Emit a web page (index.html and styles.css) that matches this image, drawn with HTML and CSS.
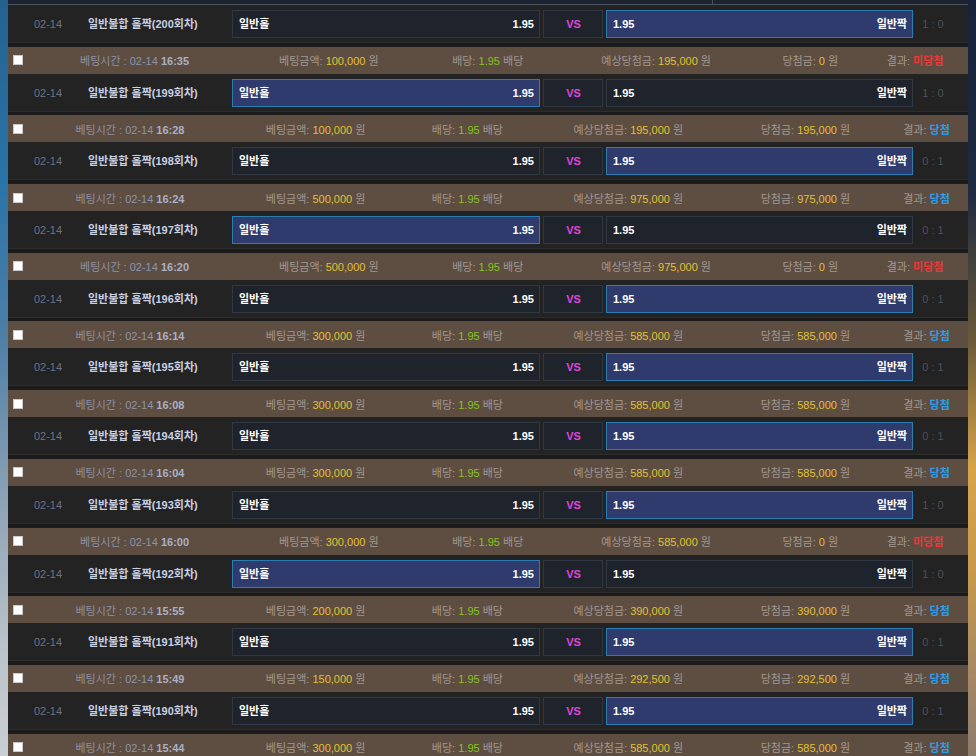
FILE: index.html
```html
<!DOCTYPE html>
<html lang="ko">
<head>
    <meta charset="UTF-8">
    <title>베팅내역</title>
    <link rel="stylesheet" href="styles.css">
</head>
<body>

    <div class="board" id="board">
        <!-- top edge of the header above -->
        <div class="board-head"><span class="head-left"></span><span class="head-right"></span></div>
    </div>

    <script>
        // round, pick (home/away), score, bet time, amount, expected, won, result
        const bets = [
            [200, 'away', '1 : 0', '16:35', '100,000', '195,000', '0', false],
            [199, 'home', '1 : 0', '16:28', '100,000', '195,000', '195,000', true],
            [198, 'away', '0 : 1', '16:24', '500,000', '975,000', '975,000', true],
            [197, 'home', '0 : 1', '16:20', '500,000', '975,000', '0', false],
            [196, 'away', '0 : 1', '16:14', '300,000', '585,000', '585,000', true],
            [195, 'away', '0 : 1', '16:08', '300,000', '585,000', '585,000', true],
            [194, 'away', '0 : 1', '16:04', '300,000', '585,000', '585,000', true],
            [193, 'away', '1 : 0', '16:00', '300,000', '585,000', '0', false],
            [192, 'home', '1 : 0', '15:55', '200,000', '390,000', '390,000', true],
            [191, 'away', '0 : 1', '15:49', '150,000', '292,500', '292,500', true],
            [190, 'away', '0 : 1', '15:44', '300,000', '585,000', '585,000', true]
        ];

        const board = document.getElementById('board');
        let html = '';

        bets.forEach(function (b) {
            const homeOn = b[1] === 'home' ? ' pick-on' : '';
            const awayOn = b[1] === 'away' ? ' pick-on' : '';
            const result = b[7]
                ? '<b class="win">당첨</b>'
                : '<b class="lose">미당첨</b>';

            // game row
            html += '<div class="game">' +
                '<div class="g-date">02-14</div>' +
                '<div class="g-title">일반불합 홀짝(' + b[0] + '회차)</div>' +
                '<div class="pick' + homeOn + '"><span>일반홀</span><span>1.95</span></div>' +
                '<div class="vs-cell"><div class="pick vs">VS</div></div>' +
                '<div class="pick' + awayOn + '"><span>1.95</span><span>일반짝</span></div>' +
                '<div class="g-score">' + b[2] + '</div>' +
            '</div>';

            // bet info row
            html += '<table class="bet"><tr>' +
                '<td class="b-check"><input type="checkbox"></td>' +
                '<td><span class="t-label">베팅시간 :</span> <span class="t-date">02-14</span> <b class="t-time">' + b[3] + '</b></td>' +
                '<td>베팅금액: <span class="money">' + b[4] + '</span> 원</td>' +
                '<td>배당: <span class="odds">1.95</span> 배당</td>' +
                '<td>예상당첨금: <span class="money">' + b[5] + '</span> 원</td>' +
                '<td>당첨금: <span class="money">' + b[6] + '</span> 원</td>' +
                '<td>결과: ' + result + '</td>' +
            '</tr></table>';
        });

        board.insertAdjacentHTML('beforeend', html);
    </script>

</body>
</html>
```

FILE: styles.css
```css
/* Page and blurred backdrop on both sides */
body {
    margin: 0;
    height: 756px;
    overflow: hidden;
    font-family: "Liberation Sans", "Noto Sans CJK KR", sans-serif;
    font-size: 11px;
    background-color: #1c1c1c;
    background-image:
        linear-gradient(to bottom, #23628f 0%, #2b74a8 25%, #4f7fa6 45%, #8aa0b4 65%, #b9c2c9 85%, #c9cfd4 100%),
        linear-gradient(to bottom, #18233a 0%, #1d2a40 25%, #6a5a3a 45%, #d6a44a 62%, #c99a4c 75%, #a48866 90%, #8c7c6c 100%);
    background-size: 8px 100%, 8px 100%;
    background-position: left top, right top;
    background-repeat: no-repeat;
}

.board {
    margin-left: 8px;
    width: 960px;
    background: #1b1b1b;
}

/* Bottom edge of the header that sits above the list */
.board-head {
    display: flex;
    height: 4px;
    background: #1d2430;
    border-bottom: 1px solid #48535f;
}

.head-left {
    width: 704px;
    border-right: 1px solid #48535f;
}

/* Game row */
.game {
    display: grid;
    grid-template-columns: 80px 144px 308px 66px 307px 1fr;
    align-items: center;
    padding: 5px 0 4px;
    background: #232323;
    border-bottom: 1px solid #2d2d2d;
    margin-bottom: 3.7px;
    line-height: 28px;
}

.g-date {
    text-align: center;
    color: #6b7386;
}

.g-title {
    color: #c9d0e3;
    font-weight: bold;
    white-space: nowrap;
}

.g-score {
    text-align: center;
    padding-right: 15px;
    color: #4e5157;
}

.pick {
    display: flex;
    justify-content: space-between;
    height: 26px;
    line-height: 26px;
    padding: 0 5px 0 6px;
    background: #1f242c;
    border: 1px solid #303844;
    color: #ffffff;
    font-weight: bold;
}

.pick-on {
    background: #2f3b6d;
    border-color: #2a7db2;
}

.vs-cell {
    padding: 0 3px;
}

.vs {
    justify-content: center;
    color: #e244d8;
}

/* Bet info row */
.bet {
    width: 100%;
    height: 27px;
    border-collapse: collapse;
    background: #5e4e42;
    color: #a1978f;
    white-space: nowrap;
}

.bet td {
    padding: 0;
    text-align: center;
    vertical-align: middle;
}

.bet td.b-check {
    width: 20px;
    padding-left: 5px;
    text-align: left;
}

.b-check input {
    appearance: none;
    display: block;
    width: 10px;
    height: 10px;
    margin: 0;
    background: #ffffff;
    border: 1px solid #c8c8c8;
    box-sizing: border-box;
}

.t-label {
    color: #8c8fa2;
}

.t-date {
    color: #8a93aa;
}

.t-time {
    color: #a9b0c3;
}

.money {
    color: #e2c033;
}

.odds {
    color: #84c41c;
}

.win {
    color: #2d9ce6;
}

.lose {
    color: #e8393a;
}
```
